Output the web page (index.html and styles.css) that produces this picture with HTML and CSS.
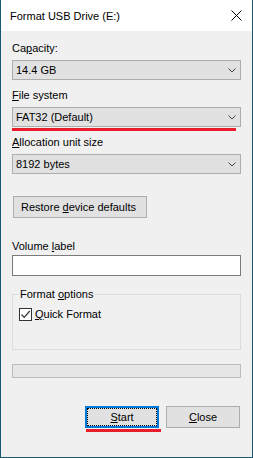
FILE: index.html
```html
<!DOCTYPE html>
<html lang="en">
<head>
    <meta charset="UTF-8">
    <title>Format USB Drive (E:)</title>
    <link rel="stylesheet" href="styles.css">
</head>
<body>
    <div class="window">
        <div class="titlebar">
            <span class="title">Format USB Drive (E:)</span>
            <svg class="close-icon" width="11" height="11" viewBox="0 0 11 11">
                <path d="M0.5 0.5 L10.5 10.5 M10.5 0.5 L0.5 10.5" stroke="#000" stroke-width="1" fill="none"/>
            </svg>
        </div>

        <div class="content">
            <label class="field-label first">Ca<u>p</u>acity:</label>
            <div class="combo">
                <span>14.4 GB</span>
                <svg class="chevron" width="8" height="5" viewBox="0 0 8 5"><path d="M0.5 0.5 L4 4 L7.5 0.5" stroke="#444" fill="none"/></svg>
            </div>

            <label class="field-label"><u>F</u>ile system</label>
            <div class="combo marked">
                <span>FAT32 (Default)</span>
                <svg class="chevron" width="8" height="5" viewBox="0 0 8 5"><path d="M0.5 0.5 L4 4 L7.5 0.5" stroke="#444" fill="none"/></svg>
            </div>

            <label class="field-label"><u>A</u>llocation unit size</label>
            <div class="combo">
                <span>8192 bytes</span>
                <svg class="chevron" width="8" height="5" viewBox="0 0 8 5"><path d="M0.5 0.5 L4 4 L7.5 0.5" stroke="#444" fill="none"/></svg>
            </div>

            <button class="btn restore">Restore <u>d</u>evice defaults</button>

            <label class="field-label volume">Volume <u>l</u>abel</label>
            <div class="textbox"></div>

            <fieldset class="group">
                <legend>Format <u>o</u>ptions</legend>
                <div class="check-row">
                    <span class="checkbox">
                        <svg width="11" height="11" viewBox="0 0 11 11"><path d="M1.5 5.5 L4.2 8.3 L9.8 2" stroke="#333" stroke-width="1.2" fill="none"/></svg>
                    </span>
                    <span><u>Q</u>uick Format</span>
                </div>
            </fieldset>

            <div class="progress"></div>

            <div class="actions">
                <button class="btn action default"><span class="focus"><u>S</u>tart</span></button>
                <button class="btn action"><u>C</u>lose</button>
            </div>
        </div>
    </div>
</body>
</html>
```

FILE: styles.css
```css
body {
    margin: 0;
    font-family: "Liberation Sans", Arial, sans-serif;
    font-size: 11px;
    color: #000;
}
.window {
    width: 253px;
    height: 458px;
    box-sizing: border-box;
    border: 1px solid #19586e;
    border-top: none;
    background-color: #f0f0f0;
    display: flex;
    flex-direction: column;
}
.titlebar {
    height: 31px;
    flex-shrink: 0;
    background-color: #fff;
    display: flex;
    align-items: center;
    justify-content: space-between;
    padding: 0 10px 0 9px;
}
.close-icon {
    display: block;
}
.content {
    flex: 1;
    display: flex;
    flex-direction: column;
    padding: 0 11px;
}
.field-label {
    display: block;
    line-height: 15px;
    margin-top: 8px;
}
.field-label.first {
    margin-top: 10px;
}
.combo {
    position: relative;
    height: 20px;
    box-sizing: border-box;
    margin-top: 4px;
    padding: 0 4px 0 3px;
    border: 1px solid #adadad;
    background-color: #e1e1e1;
    display: flex;
    align-items: center;
    justify-content: space-between;
}
.chevron {
    display: block;
}
.combo.marked::after {
    content: "";
    position: absolute;
    left: -1px;
    top: 20px;
    width: 224px;
    height: 3px;
    background-color: #e81c2a;
}
.btn {
    font-family: inherit;
    font-size: 11px;
    color: #000;
    background-color: #e1e1e1;
    border: 1px solid #adadad;
    border-radius: 0;
    margin: 0;
    height: 22px;
    box-sizing: border-box;
}
.restore {
    align-self: flex-start;
    margin: 22px 0 0 1px;
    width: 134px;
    padding: 0 0 0 7px;
    text-align: left;
}
.field-label.volume {
    margin-top: 21px;
}
.textbox {
    height: 21px;
    box-sizing: border-box;
    margin-top: 1px;
    border: 1px solid #7a7a7a;
    background-color: #fff;
}
.group {
    margin: 11px 0 0;
    padding: 6px 6px 0;
    height: 63px;
    box-sizing: border-box;
    border: 1px solid #dcdcdc;
}
.group legend {
    padding: 0 1px;
    line-height: 14px;
}
.check-row {
    display: flex;
    align-items: center;
    gap: 3px;
    line-height: 15px;
}
.checkbox {
    width: 13px;
    height: 13px;
    box-sizing: border-box;
    border: 1px solid #333;
    background-color: #fff;
    display: flex;
}
.progress {
    height: 14px;
    box-sizing: border-box;
    margin-top: 14px;
    border: 1px solid #bcbcbc;
    background-color: #e6e6e6;
}
.actions {
    display: flex;
    justify-content: flex-end;
    gap: 7px;
    margin-top: 28px;
    padding-right: 1px;
}
.action {
    position: relative;
    width: 74px;
    padding: 0;
}
.action.default {
    border: 2px solid #0078d7;
    padding: 0;
}
.action .focus {
    display: flex;
    align-items: center;
    justify-content: center;
    height: 100%;
    box-sizing: border-box;
    border: 1px dotted #000;
}
.action.default::after {
    content: "";
    position: absolute;
    left: -1px;
    top: 21px;
    width: 75px;
    height: 3px;
    background-color: #e81c2a;
}
```
